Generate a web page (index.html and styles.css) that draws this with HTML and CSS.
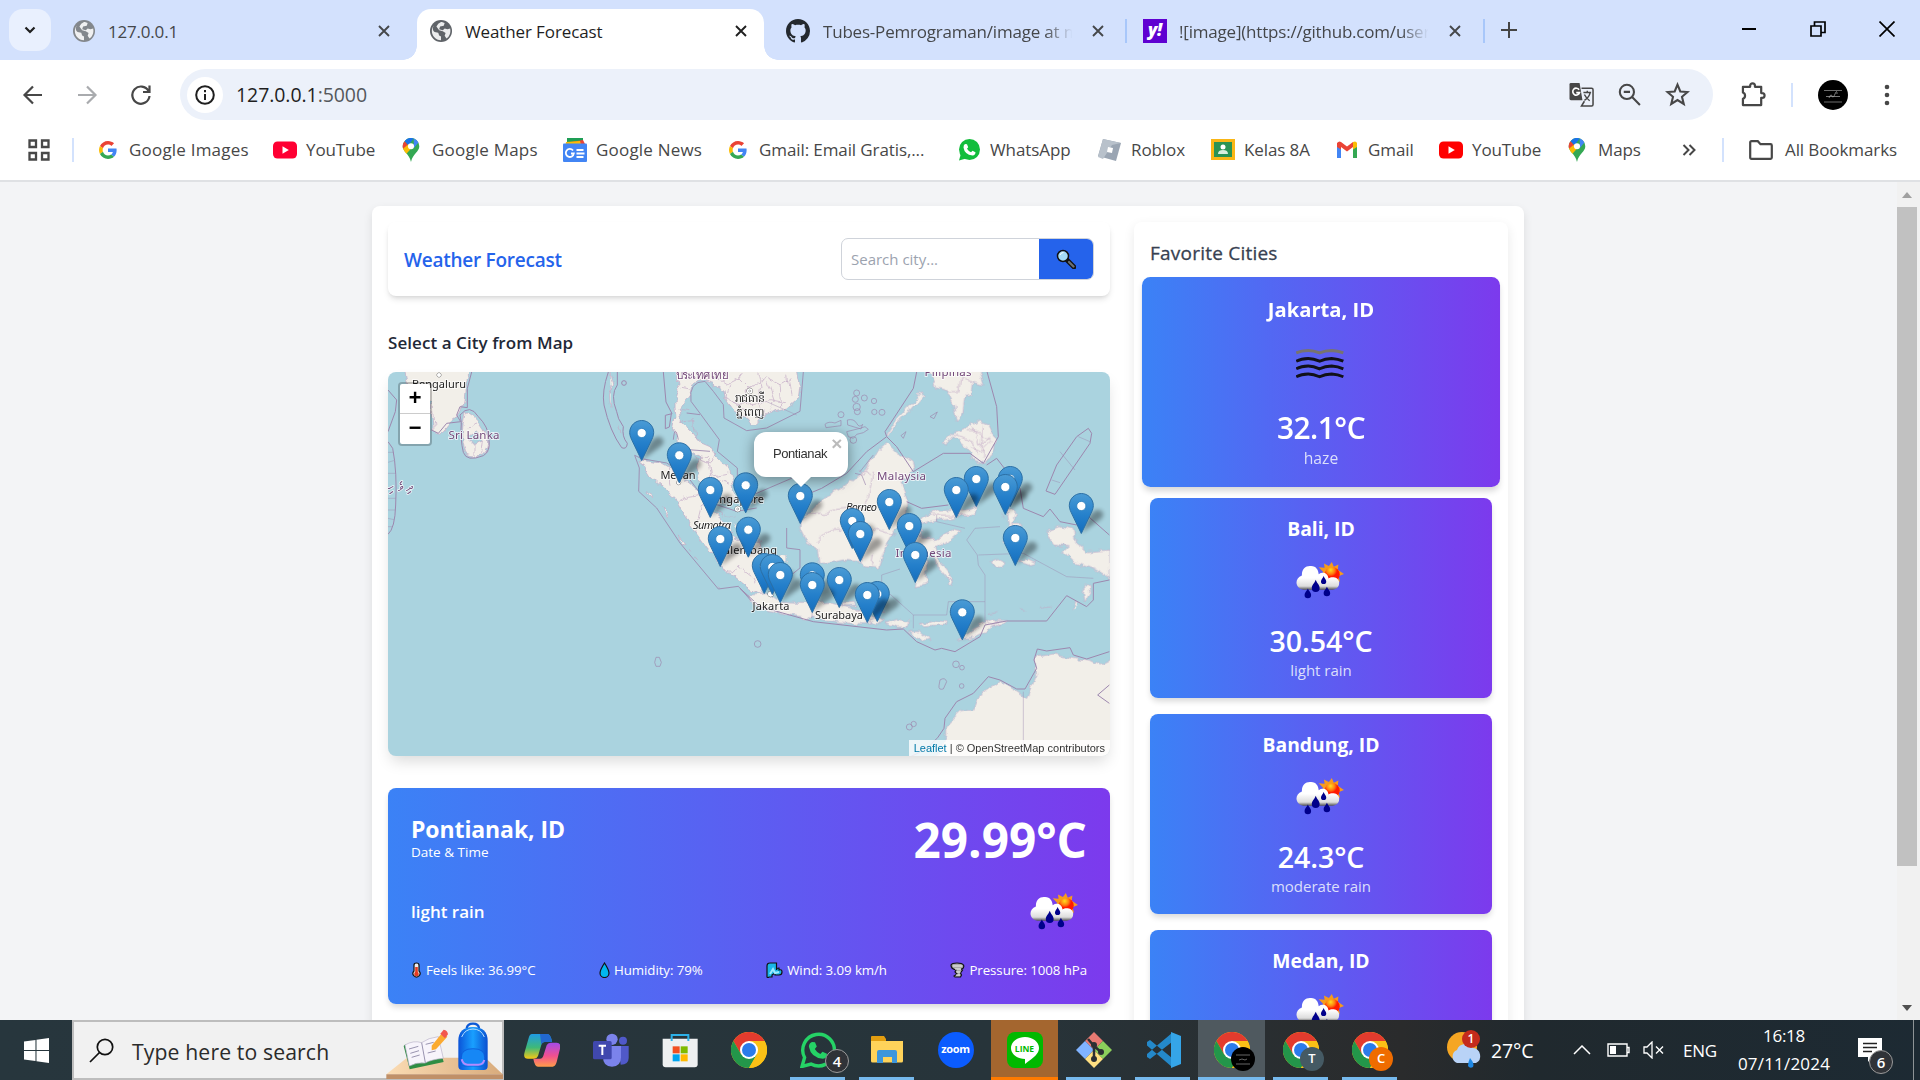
FILE: index.html
```html
<!DOCTYPE html>
<html lang="en">
<head>
<meta charset="utf-8">
<title>Weather Forecast</title>
<link rel="stylesheet" href="styles.css">
</head>
<body>
<svg class="defs" width="0" height="0" aria-hidden="true">
  <defs>
    <linearGradient id="pinFill" x1="0" y1="0" x2="0" y2="1"><stop offset="0" stop-color="#4a9bd5"/><stop offset=".55" stop-color="#2580cb"/><stop offset="1" stop-color="#146dbd"/></linearGradient>
    <linearGradient id="cloudFill" x1="0" y1="0" x2="0" y2="1"><stop offset=".5" stop-color="#fff"/><stop offset=".85" stop-color="#dcdcdc"/><stop offset="1" stop-color="#555"/></linearGradient>
    <radialGradient id="sunFill" cx=".4" cy=".2" r=".8"><stop offset="0" stop-color="#ffdf20"/><stop offset=".35" stop-color="#ff7a10"/><stop offset=".55" stop-color="#ff1a00"/></radialGradient>
    <filter id="coast" x="-5%" y="-5%" width="110%" height="110%"><feTurbulence type="fractalNoise" baseFrequency=".09" numOctaves="3" seed="4"/><feDisplacementMap in="SourceGraphic" scale="8" xChannelSelector="R" yChannelSelector="G"/></filter>
    <filter id="soft" x="-60%" y="-60%" width="220%" height="220%"><feGaussianBlur stdDeviation="2.200"/></filter>
    <symbol id="globe" viewBox="0 0 24 24"><circle cx="12" cy="12" r="12" fill="currentColor"/><path d="M4 6C2.500 9 3 12 5 13l4 1 1 3 2 1v4C6 22 2 17 2 12c0-2 .8-4.300 2-6zM13 2.200l3 1-1 3-4 1-1 3 4 1 2-2 3 1 3-1c1 5-1 9-4 11l-2-3 1-3-3-2-4-1-3-4 2-3 3-2z" fill="#fff" opacity=".88"/></symbol>
    <symbol id="x" viewBox="0 0 14 14"><path d="M2 2l10 10M12 2L2 12" stroke="currentColor" stroke-width="1.900" fill="none"/></symbol>
    <symbol id="g" viewBox="0 0 48 48"><path fill="#EA4335" d="M24 9.500c3.540 0 6.710 1.220 9.210 3.600l6.850-6.850C35.900 2.380 30.470 0 24 0 14.620 0 6.510 5.380 2.560 13.220l7.980 6.190C12.430 13.720 17.740 9.500 24 9.500z"/><path fill="#4285F4" d="M46.980 24.550c0-1.570-.15-3.090-.38-4.550H24v9.020h12.940c-.58 2.960-2.260 5.480-4.780 7.180l7.730 6c4.510-4.180 7.090-10.360 7.090-17.650z"/><path fill="#FBBC05" d="M10.530 28.590c-.48-1.450-.76-2.990-.76-4.590s.27-3.140.76-4.590l-7.980-6.190C.92 16.460 0 20.120 0 24c0 3.880.92 7.540 2.560 10.780l7.970-6.190z"/><path fill="#34A853" d="M24 48c6.480 0 11.930-2.130 15.890-5.810l-7.730-6c-2.150 1.450-4.920 2.300-8.160 2.300-6.260 0-11.570-4.220-13.470-9.910l-7.980 6.190C6.510 42.620 14.620 48 24 48z"/></symbol>
    <symbol id="yt" viewBox="0 0 24 17"><rect width="24" height="17" rx="4.500" fill="currentColor"/><path d="M9.500 4.800v7.400l6.300-3.700z" fill="#fff"/></symbol>
    <symbol id="gpin" viewBox="0 0 18 26"><path d="M9 0a9 9 0 0 0-9 9c0 6 7 8 9 17 2-9 9-11 9-17a9 9 0 0 0-9-9z" fill="#34a853"/><path d="M2 3.500A9 9 0 0 1 12 .500L6 8z" fill="#1a73e8"/><path d="M2 3.500A9 9 0 0 0 .500 12L6 8z" fill="#ea4335"/><path d="M12 .500A9 9 0 0 1 17 5l-5 6z" fill="#4285f4"/><path d="M.500 11.500c.6 2 2 3.800 3.600 5.500L12 8 6 7z" fill="#fbbc04"/><circle cx="9" cy="9" r="3.300" fill="#fff"/></symbol>
    <symbol id="chrome" viewBox="0 0 36 36"><circle cx="18" cy="18" r="18" fill="#fbc116"/><path d="M2.400 9A18 18 0 0 1 33.600 9H18l-7.800 13.500z" fill="#e33b2e"/><path d="M2.400 9A18 18 0 0 0 18 36l7.800-13.500H10.200z" fill="#23964a"/><path d="M18 36A18 18 0 0 0 33.600 9H18l7.800 13.500z" fill="#fbc116"/><circle cx="18" cy="18" r="9" fill="#fff"/><circle cx="18" cy="18" r="7" fill="#2b7bea"/></symbol>
    <symbol id="rain" viewBox="0 0 146 112"><path d="M109 0l6 14 14-7-2 16 19 13-17 7 5 17-16-4-8 12-8-12-16 2 4-14-12-8 5-6-14-14 18 1-2-13 15 8z" fill="#f79b1c"/><circle cx="110" cy="38" r="23" fill="url(#sunFill)"/><path d="M22 84C-3 80-6 50 18 41 17 20 30 10 46 12c16 1 22 12 23 25 12-9 28-4 30 13 8-7 29-6 32 10 2 14-7 23-20 24z" fill="url(#cloudFill)"/><g fill="#00008b"><path d="M60 54c4 11 12 16 12 25a12 12 0 0 1-24 0c0-9 8-14 12-25zM84 42c3 8 8 11 8 17a8 8 0 0 1-16 0c0-6 5-9 8-17zM36 80c3 8 10 12 10 20a10 10 0 0 1-20 0c0-8 7-12 10-20zM94 75c3 8 10 12 10 19a10 10 0 0 1-20 0c0-7 7-11 10-19z"/></g></symbol>
    <symbol id="haze" viewBox="0 0 140 90"><g fill="none" stroke="#111118" stroke-width="8.500"><path d="M1 14q15-7 35-7 15 0 33 7 16-7 35-7 18 1 34 7" stroke="#77736f"/><path id="wv" d="M1 38q15-8 35-8 15 0 33 8 16-8 35-8 18 1 34 8"/><use href="#wv" y="22"/><use href="#wv" y="45"/></g></symbol>
    <g id="mk"><path d="M0 0l8-17q7-9 12-5t-2 9z" fill="#000" opacity=".36" filter="url(#soft)"/><path d="M0 .500L-10.300-20.900C-11.300-23-12-25.400-12-27.500-12-34.100-6.600-39.500 0-39.500S12-34.100 12-27.500c0 2.100-.7 4.500-1.700 6.600z" fill="url(#pinFill)" stroke="#2b6fa5" stroke-width="1"/><circle cy="-27" r="4.600" fill="#fff" stroke="#2b7dbd" stroke-width=".8"/></g>
  </defs>
</svg>

<header class="browser">
  <div class="tabstrip">
    <div class="tabsearch"><svg width="12" height="8" viewBox="0 0 12 8"><path d="M1.500 1.500L6 6l4.500-4.500" fill="none" stroke="#1f1f1f" stroke-width="2.200"/></svg></div>
    <div class="tab t1"><svg class="fav grey"><use href="#globe"/></svg><span class="tt">127.0.0.1</span><svg class="cl"><use href="#x"/></svg></div>
    <div class="tab t2 active"><svg class="fav"><use href="#globe"/></svg><span class="tt">Weather Forecast</span><svg class="cl"><use href="#x"/></svg></div>
    <div class="tab t3"><svg class="fav" viewBox="0 0 16 16"><path fill="#24292f" d="M8 0C3.580 0 0 3.580 0 8c0 3.540 2.290 6.530 5.470 7.590.4.070.55-.17.55-.38 0-.19-.01-.82-.01-1.490-2.010.37-2.530-.49-2.690-.94-.09-.23-.48-.94-.82-1.130-.28-.15-.68-.52-.01-.53.63-.01 1.080.58 1.230.82.72 1.210 1.870.87 2.330.66.07-.52.28-.87.51-1.070-1.780-.2-3.640-.89-3.640-3.950 0-.87.31-1.590.82-2.150-.08-.2-.36-1.020.08-2.120 0 0 .67-.21 2.200.82.64-.18 1.320-.27 2-.27s1.360.09 2 .27c1.530-1.040 2.200-.82 2.200-.82.44 1.100.16 1.920.08 2.120.51.56.82 1.270.82 2.150 0 3.070-1.870 3.750-3.650 3.950.29.25.54.73.54 1.480 0 1.070-.01 1.930-.01 2.200 0 .21.15.46.55.38A8.010 8.010 0 0 0 16 8c0-4.420-3.580-8-8-8z"/></svg><span class="tt fade">Tubes-Pemrograman/image at main</span><svg class="cl"><use href="#x"/></svg></div>
    <div class="tab t4"><span class="yahoo">y!</span><span class="tt fade">![image](https://github.com/user-at</span><svg class="cl"><use href="#x"/></svg></div>
    <div class="newtab"><svg width="16" height="16" viewBox="0 0 16 16"><path d="M8 0v16M0 8h16" stroke="#444" stroke-width="2"/></svg></div>
    <div class="winctl">
      <svg width="16" height="16"><path d="M1 8h14" stroke="#000" stroke-width="2"/></svg>
      <svg width="16" height="16"><path d="M1 5h10v10H1zM4.500 4.500V1H15v10.500h-3.500" fill="none" stroke="#000" stroke-width="1.700"/></svg>
      <svg width="16" height="16"><path d="M.500.500l15 15M15.500.500l-15 15" stroke="#000" stroke-width="1.700"/></svg>
    </div>
  </div>
  <div class="toolbar">
    <svg class="nav" viewBox="0 0 24 24"><path d="M21 12H4M12 3.500L3.500 12l8.500 8.500" /></svg>
    <svg class="nav off" viewBox="0 0 24 24"><path d="M3 12h17M12 3.500l8.500 8.500-8.500 8.500"/></svg>
    <svg class="nav" viewBox="0 0 24 24"><path d="M19.500 8A8.600 8.600 0 1 0 20.500 13M20.500 2.500V9H14"/></svg>
    <div class="omni">
      <span class="info"><svg width="20" height="20" viewBox="0 0 20 20"><circle cx="10" cy="10" r="8.800" fill="none" stroke="#1f1f1f" stroke-width="2"/><path d="M10 9v6M10 5v2.200" stroke="#1f1f1f" stroke-width="2"/></svg></span>
      <span class="url">127.0.0.1<i>:5000</i></span>
      <svg class="oi" viewBox="0 0 26 26"><path d="M2 1h9l3 18H2q-1.500 0-1.500-1.500V2.500Q.500 1 2 1z" fill="#474747"/><path d="M13 6.500h10.500q1.500 0 1.500 1.500v15.500q0 1.500-1.500 1.500H13l3-5" fill="none" stroke="#474747" stroke-width="1.600"/><path d="M10.500 8A3.600 3.600 0 1 0 11 11H7.500" fill="none" stroke="#fff" stroke-width="1.700"/><path d="M15 11h8M19 9v2M22 11q-1 5-6 8M16 13q2 4 5.500 6.500" fill="none" stroke="#474747" stroke-width="1.500"/></svg>
      <svg class="oi" viewBox="0 0 24 24"><circle cx="9.500" cy="9.500" r="6.800" fill="none" stroke="#474747" stroke-width="2"/><path d="M14.500 14.500L22 22M6.500 9.500h6" stroke="#474747" stroke-width="2"/></svg>
      <svg class="oi" viewBox="0 0 24 24"><path d="M12 2.500l2.700 6.600 7 .5-5.400 4.600 1.700 6.900L12 17.300l-6 3.800 1.700-6.900L2.300 9.600l7-.5z" fill="none" stroke="#474747" stroke-width="2"/></svg>
    </div>
    <svg class="ext" viewBox="0 0 26 26"><path d="M2 5h7.500V4a2.500 2.500 0 0 1 5 0v1H21v6.500h1a2.500 2.500 0 0 1 0 5h-1V24H2v-6.500a3.500 3.500 0 0 0 0-6.500z" fill="none" stroke="#474747" stroke-width="2.300" stroke-linejoin="round"/></svg>
    <span class="sep"></span>
    <svg class="ava" viewBox="0 0 30 30"><circle cx="15" cy="15" r="15"/><path d="M6 10.500h18M6 22h18" stroke="#888" stroke-width=".8"/><path d="M8 16.500h14M11 18q2-5 3-2t3-2 2 0" fill="none" stroke="#aaa" stroke-width=".7"/></svg>
    <svg class="dots" width="6" height="22"><circle cx="3" cy="3" r="2.300"/><circle cx="3" cy="11" r="2.300"/><circle cx="3" cy="19" r="2.300"/></svg>
  </div>
  <div class="bookmarks">
    <svg class="apps" viewBox="0 0 22 22"><path d="M1.500 1.500h6.500v6.500H1.500zM14 1.500h6.500v6.500H14zM1.500 14h6.500v6.500H1.500zM14 14h6.500v6.500H14z" fill="none" stroke="#474747" stroke-width="2.300"/></svg>
    <span class="sep"></span>
    <div class="marks">
      <a class="wide"><svg class="s18"><use href="#g"/></svg>Google Images</a>
      <a class="y1"><svg><use href="#yt"/></svg>YouTube</a>
      <a class="wide"><svg><use href="#gpin"/></svg>Google Maps</a>
      <a class="wide"><svg viewBox="0 0 24 24"><path d="M4 0h16v8H4z" fill="#1e9e55"/><path d="M8 4l12-2 3 6H4z" fill="#ea4335"/><path d="M3 4l14-1 2 7H2z" fill="#fbbc04"/><rect y="5.500" width="24" height="18.500" rx="1" fill="#4285f4"/><path d="M10 12.500a4 4 0 1 0 .8 3H8M13.500 12h7M13.500 15.500h8M13.500 19h7" fill="none" stroke="#fff" stroke-width="1.800"/></svg>Google News</a>
      <a><svg class="s18"><use href="#g"/></svg>Gmail: Email Gratis,...</a>
      <a><svg viewBox="0 0 24 24"><circle cx="12.500" cy="11.500" r="10.500" fill="#12bd3c"/><path d="M2 22.500l2-7 5 5z" fill="#12bd3c"/><path d="M8 6l2 .200 1.200 3-1.200 1.600q1.500 2.500 4 3.500l1.500-1.500 3 1.400q0 3-3 3.200-8-1-9-8 0-2.500 1.500-3.400z" fill="#fff"/></svg>WhatsApp</a>
      <a><svg viewBox="0 0 24 24"><path d="M5 1l18 4-5 18L0 18z" fill="#9aa5b3"/><path d="M5 1l18 4-9 2-9 14-5-2z" fill="#b8c1cb"/><path d="M10 9l5 1-1 5-5-1z" fill="#fff"/></svg>Roblox</a>
      <a><svg viewBox="0 0 24 24"><path d="M0 1h24v21H0z" fill="#f9b616"/><path d="M3 4h18v15H3z" fill="#2a9354"/><circle cx="12" cy="9" r="2.500" fill="#fff"/><path d="M7 16q0-4 5-4t5 4z" fill="#d8eede"/></svg>Kelas 8A</a>
      <a><svg viewBox="0 0 24 24"><path d="M2 20V5l4 3v12z" fill="#4285f4"/><path d="M18 20V8l4-3v15z" fill="#34a853"/><path d="M2 9V5q2-2.500 4-1l6 4.500L18 4v5l-6 4.500L6 9v2.500z" fill="#ea4335"/><path d="M18 11.500V4q3-1.500 4 1v4z" fill="#fbbc04"/></svg>Gmail</a>
      <a class="y2"><svg><use href="#yt"/></svg>YouTube</a>
      <a><svg><use href="#gpin"/></svg>Maps</a>
    </div>
    <svg class="more" viewBox="0 0 14 12"><path d="M1.500 1l5 5-5 5M7.500 1l5 5-5 5" fill="none" stroke="#474747" stroke-width="2"/></svg>
    <span class="sep"></span>
    <svg class="folder" viewBox="0 0 24 20"><path d="M1.200 2.500q0-1.300 1.300-1.300h6.300l2.700 3h10q1.300 0 1.300 1.300v12q0 1.300-1.300 1.300h-19q-1.300 0-1.300-1.300z" fill="none" stroke="#474747" stroke-width="2.200"/></svg>
    <span class="all">All Bookmarks</span>
  </div>
</header>

<div class="viewport">
  <main class="shell">
    <section class="left">
      <div class="head">
        <h1>Weather Forecast</h1>
        <div class="search"><span>Search city...</span><b><svg width="20" height="20" viewBox="0 0 20 20"><path d="M11 11l7 7" stroke="#111" stroke-width="4.600" stroke-linecap="round"/><path d="M13 13l4.500 4.500" stroke="#6b7072" stroke-width="2.300" stroke-linecap="round"/><circle cx="7" cy="7" r="5.500" fill="#a4dcf8" stroke="#111" stroke-width="1.500"/><path d="M4 6q1-2.500 3.500-2.500" stroke="#fff" fill="none"/></svg></b></div>
      </div>
      <h2>Select a City from Map</h2>
      <div class="map">
        <svg width="722" height="384" viewBox="0 0 722 384">
          <g filter="url(#coast)" fill="#f2efe9" stroke="#c3a9c6" stroke-width="2">
            <g transform="translate(-8 -7) scale(.33333)">
              <path d="M72 10l8 40 20 40 50 20 10 80 15 13 15-8 25-30 23-15 12-25 6-55 19-60z"/>
              <path d="M255 145q-5 25-8 55 3 50 15 68 23 10 48 0 20-18 15-48-10-30-30-55-20-25-40-20zM262 190l30-20M265 215l20-15 25 25-25 10-20-20M285 235v35M310 225l-5 40M160 120l5 70M690 21l8 40-10 30 5 40M715 180l8 25M690 60l5 25" />
              <path d="M795 380l20 10 5 8-15-5zM848 425l15 15 5 15-12-8zM895 510l18 20 5 8-12-3zM925 550l10 12M945 575l8 10M1012 658l8 5" />
            </g>
            <g transform="translate(212 -4) scale(.33333)">
              <path d="M225 5l12 55-12 50 3 40-10 45 17 20 30 30 35 20-10 35 10 40 30 30 50 30 35 5-10-35-15-60-40-40-15-30-35-15-25-35-30-25-5-45 30-40 5-35 25-10 40 10 35 25 5 30 20 30 40 20 10 25 20-20 50-25 40-10 35-30 5-40-10-55z"/>
              <path d="M120 275l55 10 60 35 65 50 40 60 45 40 25 50 70 0 12 40-2 90-10 30-40-25-70-55-50-60-50-70-35-65-45-45-40-35z"/>
              <path d="M540 560l20 5 0 15-20 5-15-12zM400 465l20 5-5 12M375 440l25 8M405 430l18 5" stroke-width="1"/>
              <g fill="none"><path d="M205 305l8 45M235 400l30-15 30-5 10-35M290 470l15-60 25 5 40 30M330 540l20-40 50-10M370 600l30 15 15-20 40 30 10 20M400 520l40-25 50 30M262 245l30 25 45 15 10-30M300 265l25 0 10 60 50-10M330 370l5-40M340 330l50 15M240 160l40-5 10 60M235 120l30 5M245 55l25 5M350 30l30 20 40-20 30 30 50-30 40 20 35-20M390 50l-10 40 40 20 30-50M400 100l60 10 50-15 50 10M500 40l20 60-15 30M540 45l5 70M560 20l10 60M430 15l-15 20M470 15l10 40-10 50 20 35M425 120l10 25" /></g>
            </g>
            <g transform="translate(352 -7) scale(.33333)">
              <path d="M30 690l50-5 40 27 70 3 80-3 70 18 30 10 50 25-20 12-70-2-80-10-100-15-70-15-45-20zM300 712l45 0 5 8-40 3z"/>
              <path d="M180 470l20-20 45-50 65-35 70-55 20-40 40-35 30 30 50 25 5 25-45 35 20 50 0 40-40 60-30 60-15 50-45-5-10-15-50-5-70 15-5-50-35-20-20-40z"/>
              <path d="M440 210q10-30 60-80l45-50 5 10-45 50q-45 40-60 70zM570 15l150 0 12 45-35-8-5 35-20 5-8 60-15 15-10-50-20-40-30-10zM610 235l30-30 50-20 30-20 25 10 20 45-5 35-25 40-35-10-20-35-40-35-20 25z"/>
              <path d="M545 460l55-25 90-5 25-10-15 30-80 10-60 10-20 10 5 40 45 0 50-25 20 5-40 35-30 10 10 45 40 50-20 0-25-30-15-50-20 10 0 90-35 5 10-65-15-40z"/>
              <path d="M800 430l25 20-10 30 35 0-20 20-20-10zM750 590l25-6 20 10-15 14-25-6zM830 590l35-8 25 12-20 6zM785 450l8 12M790 530l25-5 5 5-25 5"/>
              <path d="M920 500l40-15 40 10 10 45 30 20 70-5 0 85-50-30-60-20-30-30 15-15-45-5zM1030 680l15-20 5 25-15 25zM1000 730l8-25 5 15"/>
              <path d="M385 768l30-10 15 10-20 15zM435 775l40-12 30 5-5 18-30 0zM540 772l40-6 40 4 0 10-70 2zM510 800l30 0 30 25-20 5zM655 822l45-30 60-30 42 3-40 22-60 30zM625 640l12 5-5 20-10-5zM745 745l30-5M840 735l18 3M895 730l40-5"/>
              <path d="M590 1180l30-70 0-30 40-40 40-5 20-45 60-40 50 30 30 20 30-70-5-50 55-10 60 10 50 5 30 15 40-20v310z"/>
              <path d="M350 740l80-2-20-5M390 300l-20 30-10-20 30 20M230 530l30-30 40-5 30-30M360 590l30-70 20-30 60 20M395 600l5-30M185 440l45 5 30 0 30-15 50-5 25 5 20-30 15-80M580 450l25 0 30 0 50-2M640 210l60 20 10 40M700 190l20 50 30-20M680 200l40 0 30 30-30 30-30-15M730 180l-5 100M620 80l40 0 5-40 30 10M740 770l25 15 5-20M770 765l10 20" fill="none"/>
            </g>
          </g>
          <g fill="none" stroke="#9d87ae" stroke-width="3" stroke-linejoin="round">
            <g transform="translate(-8 -7) scale(.33333)">
              <path d="M275 21l-13 49v58l-22-3-10 25 12 20-42 5-25 30-20-10M240 150q30-35 55 5 30 30 32 65 5 40-17 52-50 20-60-10-10-40-6-90zM24 230l14 20q14 70 9 170-2 70-23 88M24 75l26 30-4 35-22 60M685 21q-20 59-13 99 18 80 53 128 15 7 17-13-17-20-12-50-18-25-20-45-20-50 2-80V21M850 21l8 90 18 35-20 5 0 40 12-5 6-40"/>
              <path d="M24 262h17M24 292l20-6M24 325h23M24 400h23M24 435h22M24 460l18 4M24 485h12" stroke-width="1.200"/>
              <circle cx="732" cy="54" r="7"/><path d="M828 877h10l6 15-4 12h-12l-4-12z" stroke-width="2"/>
            </g>
            <g transform="translate(212 -4) scale(.33333)">
              <path d="M610 12l-10 118-100 50-60 8-68-38-2-40-30-40-25-30q-50 0-42 60l30 40 55 75-6 35 60 50v45l25 45 140-60M104 262l14 38-2 70 54 50 70 105 115 138 60-8 40 45M104 262l21 10 75 13 62 40 38 50 50 35 60 20 60-10M560 480l0 60 40 5 0 55-50 40-45-30M235 215q-10-50-15 0M265 245l65 5M300 140l-40-5" stroke-width="2.600"/>
            </g>
            <g transform="translate(352 -7) scale(.33333)">
              <path d="M0 670l60 55 160 45 220 25 50-3 40 38 55 25 20-5 40 10 75-45 15-35 65-12h120l60-76 60 33 20-20v-50l48-10M148 410l97-40 75-45 60-65 60-45 30 30 50 75 90-55h80l40 30 45-80-5-90-30-109M530 21l-10 49-85 130 5 15M740 300l30-20 70 90 10 60 60 25 20-23 30 38 50 10 30-30 68 60M1045 190l10 15-5 30-105 153-27-10 32-78 60-85zM500 410l45 20 80-10M500 1180q80-30 112-90l3-30 35-50 50-25 45-50 35 10 50 27h25l35-62-8-25 10-33 28 6 70-10 10 22 40 12 68-22M1108 960l-35 30 35 25"/>
              <path d="M425 630l55-18M425 630v35l95 85h100l5-40h110v-80l-20-30-3-30-32-45 25-35 75-5M715 570l135-5 130 70 80 5M735 710v60M590 450v20l85 20M960 260l45 55M935 345l25 8M1015 215l35 15M520 750v40M80 110l90 40M850 980v200M100 590v60M215 760l5-50" stroke-width="1.600" opacity=".8"/>
              <g stroke-width="2"><circle cx="53" cy="837" r="10"/><circle cx="648" cy="898" r="10"/><circle cx="666" cy="908" r="7"/><circle cx="665" cy="963" r="7"/><circle cx="508" cy="1086" r="9"/><circle cx="521" cy="1077" r="8"/><path d="M600 945q15-10 20 5l-10 22q-15 4-13-10z"/><circle cx="350" cy="84" r="9"/><circle cx="346" cy="103" r="9"/><circle cx="373" cy="99" r="9"/><circle cx="402" cy="108" r="8"/><circle cx="350" cy="126" r="11"/><circle cx="352" cy="140" r="9"/><circle cx="403" cy="141" r="8"/><circle cx="426" cy="142" r="9"/><circle cx="303" cy="149" r="9"/><path d="M255 178q10-10 30-4l18-8v16l-45 6zM322 165q20-5 28 10t18 3l-5 14-40-12zM320 200l40-10 15-5 10 8-15 10-20 5-10 12-15-5zM570 155l22-14-10 20zM483 212l15-12-8 20z"/><circle cx="340" cy="225" r="10"/><path d="M345 325l20 5 12 30M400 270l-40 50"/></g>
            </g>
          </g>
          <g class="lbl">
            <text x="51" y="16">Bengaluru</text><circle cx="51" cy="3" r="2"/>
            <text class="ctry" x="86" y="67" textLength="51">Sri Lanka</text>
            <text class="ctry" x="314" y="7" textLength="53">ประเทศไทย</text>
            <circle cx="361.700" cy="19" r="2.800"/><circle cx="361.700" cy="19" r=".8"/><text x="362" y="30" textLength="30">រាជធានី</text><text x="362" y="44" textLength="28">ភ្នំពេញ</text>
            <text class="ctry" x="12" y="119" textLength="24">ދިވެހި</text>
            <text x="290" y="107" textLength="35">Medan</text><circle cx="290.700" cy="110.700" r="2"/>
            <text x="349" y="131" textLength="54">Singapore</text><circle cx="349.700" cy="137" r="2.800"/><circle cx="349.700" cy="137" r=".8"/>
            <text x="324" y="157" font-style="italic" textLength="38">Sumatra</text>
            <text x="359" y="182" textLength="60">Palembang</text>
            <text x="383" y="238" textLength="37">Jakarta</text><circle cx="382.700" cy="222" r="2.800"/>
            <text x="451" y="247" textLength="48">Surabaya</text>
            <text x="473.500" y="139" font-style="italic" textLength="31">Borneo</text>
            <text class="ctry" x="513.500" y="108" textLength="49">Malaysia</text>
            <text class="ctry" x="535.500" y="185" textLength="56">Indonesia</text>
            <text class="ctry" x="560" y="4" textLength="47">Pilipinas</text>
          </g>
          <use href="#mk" x="253.700" y="88"/><use href="#mk" x="291.300" y="110.300"/><use href="#mk" x="588.300" y="134"/><use href="#mk" x="622.300" y="134"/><use href="#mk" x="357.700" y="140.300"/><use href="#mk" x="617.300" y="142"/><use href="#mk" x="322.300" y="145"/><use href="#mk" x="568.300" y="145"/><use href="#mk" x="412.300" y="151"/><use href="#mk" x="501.300" y="157"/><use href="#mk" x="693.300" y="161"/><use href="#mk" x="464.300" y="176"/><use href="#mk" x="521.300" y="181"/><use href="#mk" x="360.300" y="184.700"/><use href="#mk" x="472.300" y="189"/><use href="#mk" x="627.300" y="193"/><use href="#mk" x="332.300" y="194"/><use href="#mk" x="527.300" y="210"/><use href="#mk" x="376.300" y="221"/><use href="#mk" x="384.300" y="222"/><use href="#mk" x="392.300" y="230"/><use href="#mk" x="424.300" y="230.300"/><use href="#mk" x="451.300" y="235"/><use href="#mk" x="424.300" y="240"/><use href="#mk" x="489.300" y="249"/><use href="#mk" x="479.300" y="250"/><use href="#mk" x="574.300" y="267.300"/>
        </svg>
        <div class="zoomctl"><span>+</span><span>−</span></div>
        <div class="popup">Pontianak<em>×</em></div>
        <div class="attr"><a>Leaflet</a> | © OpenStreetMap contributors</div>
      </div>
      <div class="now">
        <div class="row top"><div><h3>Pontianak, ID</h3><p>Date &amp; Time</p></div><strong>29.99°C</strong></div>
        <div class="row mid"><span>light rain</span><svg class="wx"><use href="#rain"/></svg></div>
        <div class="row stats">
          <span><svg width="11" height="16" viewBox="0 0 11 16"><path d="M3 9V3q0-2 2.500-2T8 3v6a3.500 3.500 0 1 1-5 0z" fill="#eee" stroke="#111" stroke-width="1.200"/><path d="M5.500 5v7" stroke="#e33b22" stroke-width="2.600"/><circle cx="5.500" cy="12" r="2.300" fill="#e33b22"/></svg>Feels like: 36.99°C</span>
          <span><svg width="11" height="16" viewBox="0 0 11 16"><path d="M5.500 1q4.500 7 4.500 10a4.500 4.500 0 0 1-9 0q0-3 4.500-10z" fill="#00b7f0" stroke="#111" stroke-width="1.200"/></svg>Humidity: 79%</span>
          <span><svg width="17" height="16" viewBox="0 0 17 16"><path d="M1 15V4q0-3 3-3h6.500v7q0-2 2.500-2v2q3-1 3 2t-3 3H9v-2l-3 2v2H3l-1 1z" fill="#19b5e8" stroke="#111" stroke-width="1.200"/><path d="M4 12l3-5 2 4 4-1" fill="none" stroke="#9deaff" stroke-width="2"/></svg>Wind: 3.09 km/h</span>
          <span><svg width="15" height="16" viewBox="0 0 15 16"><path d="M1 3q1-2 6-2t6.500 2q1 3-2 4l1 1-2 3 1 2-1 2H5l-1-1 3-2-2-2 1-2q-5-1-5-5z" fill="#a9a9a9" stroke="#111" stroke-width="1.200"/><path d="M3 4h9M5 7h6M6.500 10h4M6 13h4" stroke="#eee"/></svg>Pressure: 1008 hPa</span>
        </div>
      </div>
    </section>
    <aside class="side">
      <h2>Favorite Cities</h2>
      <div class="city big"><h3>Jakarta, ID</h3><svg class="wx hz"><use href="#haze"/></svg><strong>32.1°C</strong><p>haze</p></div>
      <div class="city"><h3>Bali, ID</h3><svg class="wx"><use href="#rain"/></svg><strong>30.54°C</strong><p>light rain</p></div>
      <div class="city"><h3>Bandung, ID</h3><svg class="wx"><use href="#rain"/></svg><strong>24.3°C</strong><p>moderate rain</p></div>
      <div class="city"><h3>Medan, ID</h3><svg class="wx"><use href="#rain"/></svg></div>
    </aside>
  </main>
  <div class="scroll"><svg width="10" height="6"><path d="M0 6l5-6 5 6z" fill="#a0a0a0"/></svg><div class="thumb"></div><svg width="10" height="6"><path d="M0 0h10L5 6z" fill="#505050"/></svg></div>
</div>

<footer class="taskbar">
  <div class="start"><svg width="25" height="25" viewBox="0 0 24 24"><path d="M0 3.400l11-1.500v9.600H0zM12 1.700L24 0v11.500H12zM0 12.500h11v9.600L0 20.600zM12 12.500h12V24l-12-1.700z" fill="#fff"/></svg></div>
  <div class="tsearch">
    <svg width="25" height="25" viewBox="0 0 25 25"><circle cx="16" cy="9" r="7.700" fill="none" stroke="#111" stroke-width="1.700"/><path d="M10.500 14.500L1 24" stroke="#111" stroke-width="1.700"/></svg>
    <span>Type here to search</span>
    <svg class="art" viewBox="0 0 357 174"><defs><linearGradient id="bag" x1="0" x2="1"><stop offset="0" stop-color="#0b53d8"/><stop offset=".5" stop-color="#19a0ff"/><stop offset="1" stop-color="#0a4fd0"/></linearGradient><linearGradient id="desk" x1="0" x2="1"><stop offset="0" stop-color="#fbdcb4"/><stop offset="1" stop-color="#d8ab7c"/></linearGradient></defs><path d="M4 160l62-50h235l52 50z" fill="url(#desk)"/><path d="M4 160h350v14H4z" fill="#c09068"/><path d="M56 75l18 70 102-22-5-18-95 20-15-55z" fill="#2f8d43"/><path d="M60 72q25-15 50-7 20-15 50-18l15 65q-35 3-55 14-25-3-47 9z" fill="#f7f4fb" stroke="#b9b2c8" stroke-width="2"/><path d="M110 65l11 60M72 84l28-8M76 97l26-8M80 109l24-7M122 70l24-6M128 96l24-6" stroke="#8580a0" stroke-width="2.500"/><path d="M140 88l0-14 33-40 14 13-34 38z" fill="#fbaa30"/><path d="M166 38l10-12q12 2 13 14l-9 12z" fill="#f2574e"/><path d="M245 22q2-14 19-14t18 14" fill="none" stroke="#0b58d6" stroke-width="7"/><path d="M220 60q0-42 44-42t44 42v75q0 12-12 12h-64q-12 0-12-12z" fill="url(#bag)"/><path d="M230 48q10-24 34-24t34 24" fill="none" stroke="#b6ddff" stroke-width="3"/><path d="M229 110q0-27 35-27t35 27v15q0 10-10 10h-50q-10 0-10-10z" fill="#1687f5" stroke="#0b4fd2" stroke-width="2"/><path d="M230 115q4 16 18 16h32q14 0 18-14" fill="none" stroke="#b58bff" stroke-width="6"/></svg>
  </div>
  <div class="tasks">
    <div class="ti"><svg width="36" height="36" viewBox="0 0 108 108"><defs><linearGradient id="cpa" x1="0" y1="0" x2="0" y2="1"><stop offset="0" stop-color="#1f9be6"/><stop offset=".55" stop-color="#3fb977"/><stop offset="1" stop-color="#f6c915"/></linearGradient><linearGradient id="cpb" x1="0" y1="0" x2="0" y2="1"><stop offset="0" stop-color="#a44bea"/><stop offset=".55" stop-color="#f0508f"/><stop offset="1" stop-color="#ff9c4a"/></linearGradient></defs><path d="M24 6h46q10 0 14 24H62q-8 0-11 12L42 72q-3 8-12 8H12Q-4 80 2 60L14 18Q17 6 24 6z" fill="url(#cpa)"/><path d="M48 6h22q10 0 14 24H62q-8 0-10 8z" fill="#2268cf"/><path d="M86 104H42q-10 0-14-24h20q8 0 11-12l9-28q3-8 12-8h18q14 0 10 18L98 90q-4 14-12 14z" fill="url(#cpb)"/></svg></div>
    <div class="ti"><svg width="36" height="36" viewBox="0 0 108 108"><circle cx="57" cy="22" r="17" fill="#7b83eb"/><circle cx="90" cy="26" r="12" fill="#5059c9"/><path d="M76 42h31v36q0 20-24 20z" fill="#5059c9"/><path d="M30 42h54v34q0 28-27 28T30 76z" fill="#7b83eb"/><rect y="27" width="56" height="55" rx="5" fill="#4048ae"/><path d="M17 41h22M28 41v28" stroke="#fff" stroke-width="6"/></svg></div>
    <div class="ti"><svg width="36" height="36" viewBox="0 0 108 108"><path d="M2 20h105v77q0 9-9 9H11q-9 0-9-9z" fill="#eef0f1"/><path d="M29 27V9h50v18" fill="none" stroke="#2db1e8" stroke-width="6"/><path d="M32 43h21v21H32z" fill="#f25022"/><path d="M56 43h21v21H56z" fill="#7fba00"/><path d="M32 67h21v21H32z" fill="#00a4ef"/><path d="M56 67h21v21H56z" fill="#ffb900"/></svg></div>
    <div class="ti"><svg width="36" height="36"><use href="#chrome"/></svg></div>
    <div class="ti run"><svg width="36" height="36" viewBox="0 0 36 36"><path d="M2 34.500l2.600-9A15.800 15.800 0 1 1 11 32z" fill="none" stroke="#25d366" stroke-width="3.400"/><path d="M12 10l3 .300 1.800 4.300-2 2.500q2 3.500 5.500 5l2.200-2.300 4.400 2q.5 4.500-4 5-12-1-14-12 0-3.500 3.100-4.800z" fill="#25d366"/></svg><span class="badge n4">4</span></div>
    <div class="ti run"><svg width="34" height="30" viewBox="0 0 34 30"><path d="M1 2q0-1 1-1h12l2 3v5H1z" fill="#e39e10"/><path d="M1 6h32v20q0 1.500-1.500 1.500h-29Q1 27.500 1 26z" fill="#ffd35a"/><path d="M7 28V17q0-2 2-2h16q2 0 2 2v11h-5v-6h-9v6z" fill="#3d96dc"/></svg></div>
    <div class="ti"><span class="zoomapp">zoom</span></div>
    <div class="ti line"><span class="lineapp"><svg width="30" height="28" viewBox="0 0 30 28"><path d="M15 1c8 0 14 5 14 11s-5 9-14 16v-5C7 23 1 18 1 12S7 1 15 1z" fill="#fff"/></svg><b>LINE</b></span></div>
    <div class="ti run"><svg width="36" height="36" viewBox="0 0 36 36"><path d="M18 0l9 9-9 9-9-9z" fill="#e87a72"/><path d="M9 9l9 9-9 9-9-9z" fill="#80b3ff"/><path d="M27 9l9 9-9 9-9-9z" fill="#8bcf5b"/><path d="M18 18l9 9-9 9-9-9z" fill="#ffe082"/><path d="M12 7l6 7v13M18 14l7 6" stroke="#2b2f33" stroke-width="2.500" fill="none"/><g fill="#2b2f33"><circle cx="18" cy="13" r="3"/><circle cx="18" cy="27" r="3"/><circle cx="25" cy="20" r="3"/></g></svg></div>
    <div class="ti run"><svg width="36" height="36" viewBox="0 0 36 36"><path d="M2 10l3-2 22 18v9L2 13.500zM2 25l3 2L27 10V1L2 22z" fill="#2489ca"/><path d="M26 0l10 4v28l-10 4z" fill="#35a5e8"/></svg></div>
    <div class="ti run on"><svg width="36" height="36"><use href="#chrome"/></svg><svg class="pb" width="24" height="24"><circle cx="12" cy="12" r="12"/><path d="M5 8h14M5 17h14M8 13l3-1 3 1 2-1" stroke="#666" fill="none"/></svg></div>
    <div class="ti run"><svg width="36" height="36"><use href="#chrome"/></svg><span class="badge pt">T</span></div>
    <div class="ti run"><svg width="36" height="36"><use href="#chrome"/></svg><span class="badge pc">C</span></div>
  </div>
  <div class="tray">
    <span class="wthr"><svg width="36" height="40" viewBox="0 0 36 40"><circle cx="15" cy="17" r="15" fill="#f5a623"/><path d="M10 33a7 7 0 0 1 0-13 9 9 0 0 1 16-2 8 8 0 0 1 3 15z" fill="#b9d3f7"/><path d="M23 28q5 6 3 9-3 2-5-1 0-4 2-8z" fill="#1e88e5"/></svg><span class="badge red">1</span></span>
    <span class="tmp">27°C</span>
    <svg class="chev" width="18" height="10"><path d="M1 9l8-8 8 8" fill="none" stroke="#fff" stroke-width="1.500"/></svg>
    <svg class="bat" width="24" height="14"><path d="M1 1h19v12H1zM20 4.500h2v5h-2" fill="none" stroke="#fff" stroke-width="1.400"/><path d="M3 3h6v8H3z" fill="#fff"/></svg>
    <svg class="spk" width="22" height="18" viewBox="0 0 22 18"><path d="M1 6h3l5-5v16l-5-5H1z" fill="none" stroke="#fff" stroke-width="1.300"/><path d="M13 5.500l7 7M20 5.500l-7 7" stroke="#fff" stroke-width="1.400"/></svg>
    <span class="eng">ENG</span>
    <span class="clock"><span>16:18</span><span class="date">07/11/2024</span></span>
    <span class="note"><svg width="24" height="25"><path d="M0 0h24v19H14l-4 5v-5H0z" fill="#fff"/><path d="M5 5.500h14M5 9.500h14M5 13.500h9" stroke="#222" stroke-width="1.300"/></svg><span class="badge n6">6</span></span>
  </div>
</footer>
</body>
</html>
```
FILE: styles.css
```css
* { box-sizing: border-box; margin: 0; padding: 0; }
body { width: 1920px; height: 1080px; overflow: hidden; display: flex; flex-direction: column; font-family: "Open Sans", "Noto Sans", sans-serif; background: #f3f4f6; }
.defs { position: absolute; }
svg { flex: none; display: block; }

/* browser chrome */
.browser { height: 182px; flex: none; background: #fff; border-bottom: 2px solid #dfe1e4; color: #474747; }
.tabstrip { height: 60px; background: #d3e1fd; display: flex; align-items: flex-start; padding: 9px 0 0 9px; }
.tabsearch { width: 42px; height: 42px; border-radius: 14px; background: #e9f0fe; display: grid; place-items: center; }
.tab { height: 51px; padding-bottom: 8px; display: flex; align-items: center; font-size: 17px; color: #45474a; position: relative; letter-spacing: -.2px; }
.t1 { width: 366px; padding-left: 22px; }
.t2 { width: 347px; padding-left: 13px; }
.t3 { width: 363px; padding-left: 22px; }
.t4 { width: 358px; padding-left: 16px; }
.tab.active { background: #fff; border-radius: 14px 14px 0 0; color: #1f1f1f; letter-spacing: -.12px; }
.active::before, .active::after { content: ""; position: absolute; bottom: 0; width: 14px; height: 14px; }
.active::before { left: -14px; background: radial-gradient(circle at 0 0, transparent 13.5px, #fff 14px); }
.active::after { right: -14px; background: radial-gradient(circle at 100% 0, transparent 13.5px, #fff 14px); }
.t3::after, .t4::after { content: ""; position: absolute; right: 0; top: 10px; width: 2px; height: 24px; background: #a8c7fa; }
.fav { width: 22px; height: 22px; color: #5f6368; }
.t3 .fav { width: 24px; height: 24px; }
.grey { color: #83878c; }
.tt { margin: 1px 0 0 13px; white-space: nowrap; overflow: hidden; flex: none; width: 252px; }
.t1 .tt { width: 257px; }
.fade { -webkit-mask-image: linear-gradient(90deg, #000 88%, transparent 99%); mask-image: linear-gradient(90deg, #000 88%, transparent 99%); }
.t4 .tt { margin-left: 12px; }
.cl { width: 14px; height: 14px; margin-left: 12px; }
.t2 .cl { margin-left: 17px; }
.t3 .cl { margin-left: 16px; }
.t4 .cl { margin-left: 17px; }
.yahoo { width: 24px; height: 24px; background: #5f01d1; color: #fff; font: italic 800 17px/22px "Open Sans", sans-serif; text-align: center; flex: none; }
.newtab { width: 52px; padding: 13px 0 0 16px; }
.winctl { margin-left: auto; width: 179px; display: flex; gap: 53px; padding-top: 12px; }
.toolbar { height: 69px; display: flex; align-items: center; padding-left: 21px; }
.nav { width: 24px; height: 24px; margin-right: 30px; fill: none; stroke: #474747; stroke-width: 2.2; }
.nav.off { stroke: #a9abae; }
.omni { width: 1533px; height: 51px; border-radius: 26px; background: #ecf1fa; display: flex; align-items: center; padding: 0 23px 0 7px; margin-left: -3px; }
.info { width: 36px; height: 36px; border-radius: 50%; background: #fff; display: grid; place-items: center; margin-right: 13px; }
.url { font-size: 19.5px; color: #1f1f1f; margin-right: auto; letter-spacing: -.07px; }
.url i { font-style: normal; color: #55585c; }
.oi { width: 25px; height: 25px; margin-left: 23px; }
.ext { width: 25px; height: 25px; margin-left: 28px; }
.sep { width: 2px; height: 24px; background: #d3e2fd; }
.toolbar .sep { margin: 0 25px; }
.ava { width: 30px; height: 30px; margin-right: 36px; }
.dots { fill: #474747; }
.bookmarks { height: 42px; display: flex; align-items: center; padding-left: 28px; padding-bottom: 1px; font-size: 17px; color: #474747; letter-spacing: -.1px; }
.apps { width: 22px; height: 22px; margin-right: 22px; }
.marks { display: grid; grid-template-columns: 177px 126px 164px 163px 231px 141px 113px 124px 104px 126px 115px; margin-left: 22px; }
.marks a { display: flex; align-items: center; gap: 9px; white-space: nowrap; }
.marks .wide { letter-spacing: .2px; }
.marks svg { width: 24px; height: 24px; }
.marks .s18 { width: 18px; height: 18px; margin: 0 3px; }
.marks .y1 svg { color: #ff0033; }
.marks .y2 svg { color: #f00; }
.more { width: 14px; height: 12px; margin: 0 26px 0 2px; }
.folder { width: 24px; height: 20px; margin: 0 12px 0 25px; }
.all { white-space: nowrap; }

/* page */
.viewport { flex: 1; min-height: 0; display: flex; overflow: hidden; }
.shell { width: 1152px; height: 1000px; margin: 24px 0 0 372px; background: #fff; border-radius: 8px; box-shadow: 0 4px 10px rgba(0,0,0,.1); padding: 16px; display: flex; gap: 24px; }
.left { width: 722px; flex: none; }
.head { height: 74px; border-radius: 8px; box-shadow: 0 4px 6px -1px rgba(0,0,0,.12), 0 2px 4px -2px rgba(0,0,0,.1); padding: 0 16px; display: flex; align-items: center; justify-content: space-between; }
h1 { font-size: 19px; font-weight: 600; color: #2563eb; letter-spacing: -.25px; padding-top: 2px; }
.search { display: flex; width: 253px; height: 42px; border: 1px solid #cfd3da; border-radius: 7px; overflow: hidden; font-size: 15px; color: #9ca3af; align-items: center; justify-content: space-between; padding-left: 9px; }
.search b { width: 54px; height: 42px; background: #2563eb; display: grid; place-items: center; }
.left > h2 { font-size: 17px; font-weight: 600; color: #1f2937; line-height: 28px; margin: 33px 0 15px; letter-spacing: .06px; }
.map { position: relative; height: 384px; border-radius: 8px; overflow: hidden; background: #aad3df; isolation: isolate; box-shadow: 0 8px 15px -3px rgba(0,0,0,.15); }
.lbl { font: 11px "Noto Sans", sans-serif; text-anchor: middle; fill: #222; paint-order: stroke; stroke: #fff; stroke-opacity: .7; stroke-width: 1.8px; }
.lbl circle { fill: #fff; stroke: #444; stroke-width: .8px; stroke-opacity: 1; }
.ctry { fill: #73497a; font-size: 11.5px; }
.zoomctl { position: absolute; left: 10px; top: 10px; width: 34px; height: 64px; border: 2px solid rgba(0,0,0,.22); border-radius: 4px; background: #fff; background-clip: padding-box; display: flex; flex-direction: column; font: bold 22px/32px "Liberation Mono", monospace; text-align: center; }
.zoomctl span { height: 29px; }
.zoomctl span + span { height: 31px; border-top: 1px solid #ccc; line-height: 31px; }
.popup { position: absolute; left: 366px; top: 60px; width: 94px; height: 45px; border-radius: 12px; background: #fff; box-shadow: 0 3px 14px rgba(0,0,0,.4); font: 13px/44px "Liberation Sans", sans-serif; text-align: center; color: #333; letter-spacing: -.4px; padding-right: 2px; }
.popup::after { content: ""; position: absolute; left: 36px; top: 44px; border: 11px solid transparent; border-top-color: #fff; border-bottom: 0; }
.popup em { position: absolute; right: 6px; top: 0; font: bold 19px/24px "Liberation Sans", sans-serif; color: #bbb; }
.attr { position: absolute; right: 0; bottom: 0; padding: 0 5px; height: 16px; background: rgba(255,255,255,.8); font: 11px/16px "Liberation Sans", sans-serif; color: #333; white-space: nowrap; }
.attr a { color: #0078a8; }
.now, .city { background: linear-gradient(90deg, #3b82f6, #7c3aed); color: #fff; border-radius: 8px; box-shadow: 0 4px 6px -1px rgba(0,0,0,.16); }
.now { height: 216px; margin-top: 32px; padding: 23px 23px 0; }
.row { display: flex; justify-content: space-between; align-items: center; }
.top { height: 58px; }
.top > div { padding-bottom: 5px; }
.top h3 { font-size: 23px; line-height: 32px; font-weight: 700; letter-spacing: -.1px; }
.top p { font-size: 13.5px; line-height: 20px; margin-top: -3px; }
.top strong { font-size: 47.7px; line-height: 48px; font-weight: 700; }
.mid { height: 50px; margin: 17px 9px 0 0; font-size: 17px; font-weight: 600; }
.wx { width: 48px; height: 37px; }
.stats { font-size: 13.3px; margin-top: 24px; letter-spacing: -.08px; }
.stats span { display: flex; align-items: center; gap: 4px; height: 20px; }
.side { width: 374px; height: 980px; border-radius: 8px; padding: 16px; box-shadow: 0 4px 12px rgba(0,0,0,.09); }
.side h2 { font-size: 19px; line-height: 28px; font-weight: 500; color: #374151; margin-bottom: 16px; -webkit-text-stroke: .3px; letter-spacing: .22px; padding-top: 1px; height: 28px; }
.city { height: 200px; margin-bottom: 16px; display: flex; flex-direction: column; align-items: center; padding-top: 17px; }
.city h3 { font-size: 19.3px; line-height: 28px; font-weight: 700; letter-spacing: 0; }
.city .wx { margin: 19px 2px 24px 0; }
.city .hz { width: 46px; height: 31px; margin: 22px 3px 27px 0; }
.city strong { font-size: 28.6px; line-height: 36px; font-weight: 600; letter-spacing: -.1px; }
.city p { font-size: 15px; line-height: 24px; color: #dbdffb; margin-top: -1px; }
.big { transform: scale(1.047, 1.05); }
.big strong { letter-spacing: -.5px; }
.scroll { width: 23px; margin-left: auto; background: #f1f1f1; display: flex; flex-direction: column; align-items: center; padding: 10px 3px 9px 0; }
.thumb { width: 20px; height: 659px; background: #c1c1c1; margin: 9px 0 auto; }

/* taskbar */
.taskbar { height: 60px; flex: none; display: flex; color: #fff; background: linear-gradient(90deg, #27363d 0, #27343a 52%, #2a2b2c 73%, #20292e 80%, #1d2a33); }
.start { width: 72px; display: grid; place-items: center; }
.tsearch { width: 432px; background: #f1f1f1; border: 2px solid #bdbdbd; display: flex; align-items: center; color: #2b2b2b; font-size: 21.2px; letter-spacing: .12px; padding-left: 15px; }
.tsearch span { margin: 2px auto 0 18px; }
.art { width: 119px; height: 58px; margin-right: -2px; }
.tasks { display: flex; margin-left: 4px; }
.ti { width: 67px; margin-right: 2px; display: grid; place-items: center; position: relative; }
.run::after, .line::after { content: ""; position: absolute; left: 6px; right: 6px; bottom: 0; height: 3px; background: #76b9ed; }
.on { background: #4f595f; }
.on::after { left: 0; right: 0; }
.line { background: #a4662f; }
.line::after { left: 0; right: 0; background: #ff7a00; }
.badge { position: absolute; border-radius: 50%; text-align: center; width: 24px; height: 24px; font: 600 15px/23px "Open Sans", sans-serif; }
.n4, .n6 { background: #303338; border: 1px solid #9b9b9b; left: 41px; top: 29px; }
.pb { position: absolute; left: 33px; top: 27px; }
.pt, .pc { left: 33px; top: 27px; background: #455a64; font-size: 13px; }
.pc { background: #ef6c00; }
.zoomapp { width: 36px; height: 36px; border-radius: 50%; background: #0b5cff; font: 700 11px/34px "Open Sans", sans-serif; text-align: center; letter-spacing: -.3px; }
.lineapp { width: 36px; height: 36px; border-radius: 8px; background: #00b900; display: grid; place-items: center; }
.lineapp svg, .lineapp b { grid-area: 1/1; }
.lineapp b { color: #00b900; font-size: 8.5px; margin-top: -4px; }
.tray { margin-left: auto; display: flex; align-items: center; padding-right: 6px; border-right: 1px solid #8d9396; margin-right: 6px; }
.wthr { position: relative; margin-right: 8px; }
.red { background: #c42b1c; width: 18px; height: 18px; font-size: 12px; line-height: 18px; left: 15px; top: 0; }
.tmp { font-size: 19.5px; width: 82px; letter-spacing: -.1px; }
.chev { margin-right: 16px; }
.bat { margin-right: 12px; }
.spk { margin-right: 18px; }
.eng { font-size: 17px; width: 53px; letter-spacing: -.2px; }
.clock { display: flex; flex-direction: column; text-align: center; font-size: 17px; line-height: 28px; width: 96px; letter-spacing: -.25px; white-space: nowrap; margin-right: 26px; }
.date { letter-spacing: .2px; }
.note { position: relative; margin-right: 25px; }
.n6 { left: 11px; top: 12px; }
```
